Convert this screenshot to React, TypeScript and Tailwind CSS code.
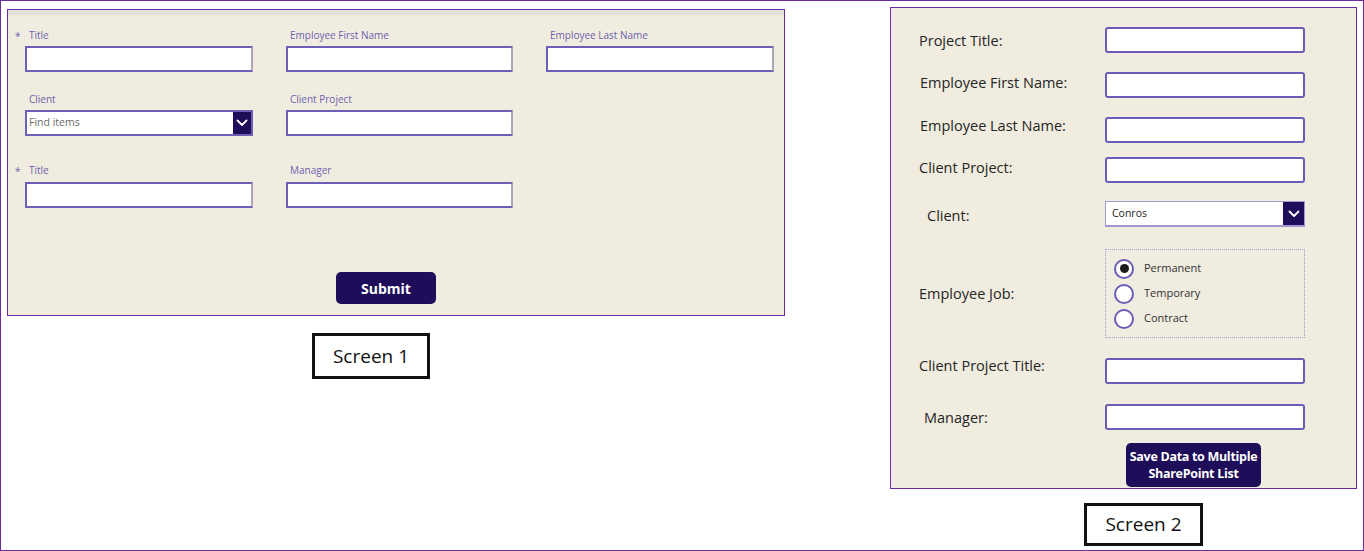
import React from 'react';

const Chevron: React.FC = () => (
  <svg width="12" height="8" viewBox="0 0 12 8" fill="none">
    <path d="M1.5 1.5 L6 6 L10.5 1.5" stroke="white" strokeWidth="1.8" strokeLinecap="round" strokeLinejoin="round" />
  </svg>
);

const S1Field: React.FC<{ label: string; required?: boolean; children?: React.ReactNode; lblGap?: string }> = ({
  label,
  required,
  children,
  lblGap = 'mb-[3px]',
}) => (
  <div className="flex flex-col">
    <div className={`relative h-[16px] pl-[4px] text-[10px] leading-[16px] text-[#6d5fb0] ${lblGap}`}>
      {required && <span className="absolute left-[-10px] top-[1px] text-[10px] text-[#6d5fb0]">*</span>}
      {label}
    </div>
    {children ?? (
      <div className="h-[26px] border-2 border-[#6e5fb6] border-r-[#a9a6b6] bg-white" />
    )}
  </div>
);

const S2Input: React.FC = () => (
  <div className="h-[26px] w-[200px] rounded-[3px] border-2 border-[#6b5cb6] bg-white" />
);

// each row has a fixed height; the label is nudged with its own top margin
const S2Row: React.FC<{ label: string; mt: string; lbl: string; h?: string; children?: React.ReactNode }> = ({
  label,
  mt,
  lbl,
  h = 'h-[26px]',
  children,
}) => (
  <div className={`flex items-start pl-[28px] ${h} ${mt}`}>
    <div className={`w-[186px] shrink-0 text-[14.5px] leading-[20px] font-medium text-[#252525] ${lbl}`}>{label}</div>
    {children ?? <S2Input />}
  </div>
);

const Radio: React.FC<{ label: string; checked?: boolean }> = ({ label, checked }) => (
  <div className="flex h-[25px] items-center">
    <div className="ml-[8px] flex h-[20px] w-[20px] items-center justify-center rounded-full border-2 border-[#6b5cb8] bg-white">
      {checked && <div className="h-[9px] w-[9px] rounded-full bg-[#1c1c1c]" />}
    </div>
    <span className="ml-[10px] text-[11px] text-[#333]">{label}</span>
  </div>
);

export default function App() {
  return (
    <div
      className="flex h-[551px] w-[1364px] border border-[#6a2b9e] bg-white"
      style={{ fontFamily: '"Open Sans", "Noto Sans", sans-serif' }}
    >
      {/* Screen 1 */}
      <div className="ml-[6px] flex flex-col pt-[8px]">
        <div className="flex h-[307px] w-[778px] flex-col border border-[#6a2b9e] bg-[#f0ecdf]">
          <div className="h-[5px] bg-[#e2e0da]" />
          <div className="flex flex-col pl-[17px] pt-[12px]">
            <div className="grid grid-cols-[228px_227px_228px] gap-x-[33px]">
              <S1Field label="Title" required />
              <S1Field label="Employee First Name" />
              <S1Field label="Employee Last Name" />
            </div>
            <div className="mt-[19px] grid grid-cols-[228px_227px_228px] gap-x-[33px]">
              <S1Field label="Client">
                <div className="flex h-[26px] border-2 border-[#6e5fb6] bg-white">
                  <div className="flex flex-1 items-center pl-[2px] text-[10.5px] text-[#6b6b6b]">Find items</div>
                  <div className="flex w-[18px] items-center justify-center bg-[#1e0d59]">
                    <Chevron />
                  </div>
                </div>
              </S1Field>
              <S1Field label="Client Project" />
            </div>
            <div className="mt-[26px] grid grid-cols-[228px_227px_228px] gap-x-[33px]">
              <S1Field label="Title" required lblGap="mb-[4px]" />
              <S1Field label="Manager" lblGap="mb-[4px]" />
            </div>
            <button className="ml-[311px] mt-[64px] h-[32px] w-[100px] rounded-[5px] bg-[#1e0d59] text-[14px] font-bold text-white">
              Submit
            </button>
          </div>
        </div>
        <div className="ml-[305px] mt-[17px] flex h-[46px] w-[118px] items-center justify-center border-[3px] border-[#111] text-[19px] text-[#111]">
          Screen 1
        </div>
      </div>

      {/* Screen 2 */}
      <div className="ml-[105px] flex flex-col pt-[6px]">
        <div className="flex h-[482px] w-[467px] flex-col border border-[#6a2b9e] bg-[#f0ecdf] pt-[19px]">
          <S2Row label="Project Title:" mt="mt-0" lbl="mt-[4px]" />
          <S2Row label="Employee First Name:" mt="mt-[19px]" lbl="mt-[1px] pl-[1px]" />
          <S2Row label="Employee Last Name:" mt="mt-[19px]" lbl="-mt-[1px] pl-[1px]" />
          <S2Row label="Client Project:" mt="mt-[14px]" lbl="mt-[1px]" />
          <S2Row label="Client:" mt="mt-[18px]" lbl="mt-[5px] pl-[8px]">
            <div className="flex h-[26px] w-[200px] border border-b-2 border-[#a396d2] bg-white">
              <div className="flex flex-1 items-center pl-[6px] text-[10.5px] text-[#222]">Conros</div>
              <div className="flex w-[21px] items-center justify-center bg-[#1e0d59]">
                <Chevron />
              </div>
            </div>
          </S2Row>
          <S2Row label="Employee Job:" mt="mt-[22px]" lbl="mt-[35px]" h="h-[89px]">
            <div className="flex h-[89px] w-[200px] flex-col border border-dotted border-[#a396d2] pt-[6px]">
              <Radio label="Permanent" checked />
              <Radio label="Temporary" />
              <Radio label="Contract" />
            </div>
          </S2Row>
          <S2Row label="Client Project Title:" mt="mt-[20px]" lbl="-mt-[2px]" />
          <S2Row label="Manager:" mt="mt-[20px]" lbl="mt-[4px] pl-[5px]" />
          <button className="ml-[235px] mt-[13px] flex h-[44px] w-[135px] flex-col items-center justify-center rounded-[5px] bg-[#1e0d59] text-[12.5px] font-bold leading-[17px] tracking-[-0.3px] text-white">
            <span>Save Data to Multiple</span>
            <span>SharePoint List</span>
          </button>
        </div>
        <div className="ml-[194px] mt-[14px] flex h-[43px] w-[119px] items-center justify-center border-[3px] border-[#111] text-[19px] text-[#111]">
          Screen 2
        </div>
      </div>
    </div>
  );
}
